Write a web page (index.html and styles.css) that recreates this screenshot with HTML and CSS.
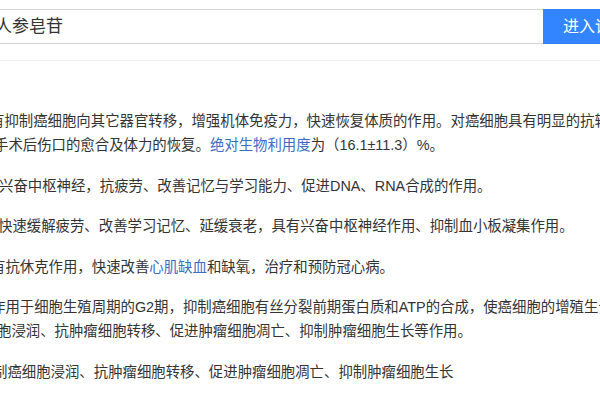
FILE: index.html
```html
<!DOCTYPE html>
<html lang="zh-CN">
<head>
<meta charset="utf-8">
<link rel="stylesheet" href="styles.css">
</head>
<body>
<header class="header">
  <div class="search">
    <div class="search-input">人参皂苷</div>
    <div class="search-btn">进入详情</div>
  </div>
</header>
<main class="content">
  <p class="para"><span class="line l1a">有抑制癌细胞向其它器官转移，增强机体免疫力，快速恢复体质的作用。对癌细胞具有明显的抗转移作用</span><span class="line l1b">手术后伤口的愈合及体力的恢复。<a class="link">绝对生物利用度</a>为（16.1±11.3）%。</span></p>
  <p class="para"><span class="line l2">兴奋中枢神经，抗疲劳、改善记忆与学习能力、促进DNA、RNA合成的作用。</span></p>
  <p class="para"><span class="line l3">快速缓解疲劳、改善学习记忆、延缓衰老，具有兴奋中枢神经作用、抑制血小板凝集作用。</span></p>
  <p class="para"><span class="line l4">有抗休克作用，快速改善<a class="link">心肌缺血</a>和缺氧，治疗和预防冠心病。</span></p>
  <p class="para"><span class="line l5a">作用于细胞生殖周期的G2期，抑制癌细胞有丝分裂前期蛋白质和ATP的合成，使癌细胞的增殖生长速度减慢</span><span class="line l5b">胞浸润、抗肿瘤细胞转移、促进肿瘤细胞凋亡、抑制肿瘤细胞生长等作用。</span></p>
  <p class="para"><span class="line l6">制癌细胞浸润、抗肿瘤细胞转移、促进肿瘤细胞凋亡、抑制肿瘤细胞生长</span></p>
</main>
</body>
</html>
```

FILE: styles.css
```css
html, body {
  margin: 0;
  padding: 0;
  background: #fff;
  overflow: hidden;
  width: 600px;
  height: 400px;
}
body {
  font-family: "Liberation Sans", "Noto Sans CJK SC", sans-serif;
  color: #333;
}
.header {
  padding-top: 9px;
  padding-bottom: 16px;
  border-bottom: 1px solid #f0f0f0;
}
.search {
  display: flex;
  height: 35px;
  margin-left: -20px;
}
.search-input {
  flex: none;
  width: 563px;
  box-sizing: border-box;
  border: 1px solid #d3d3d3;
  border-right: none;
  font-size: 17px;
  line-height: 33px;
  padding-left: 14px;
  color: #333;
  white-space: nowrap;
}
.search-btn {
  flex: none;
  width: 100px;
  background: #3385ff;
  color: #fff;
  font-size: 16px;
  line-height: 35px;
  padding-left: 20px;
  white-space: nowrap;
}
.content {
  padding-top: 48px;
}
.para {
  margin: 0 0 16px;
  font-size: 14.4px;
  line-height: 24.4px;
}
.line {
  display: block;
  white-space: nowrap;
}
.link {
  color: #3a6dc4;
}
.l1a { margin-left: -10px; }
.l1b { margin-left: -6px; }
.l2 { margin-left: -1px; }
.l3 { margin-left: -2px; }
.l4 { margin-left: -9px; }
.l5a { margin-left: -9px; }
.l5b { margin-left: -3px; }
.l6 { margin-left: -7px; }
```
